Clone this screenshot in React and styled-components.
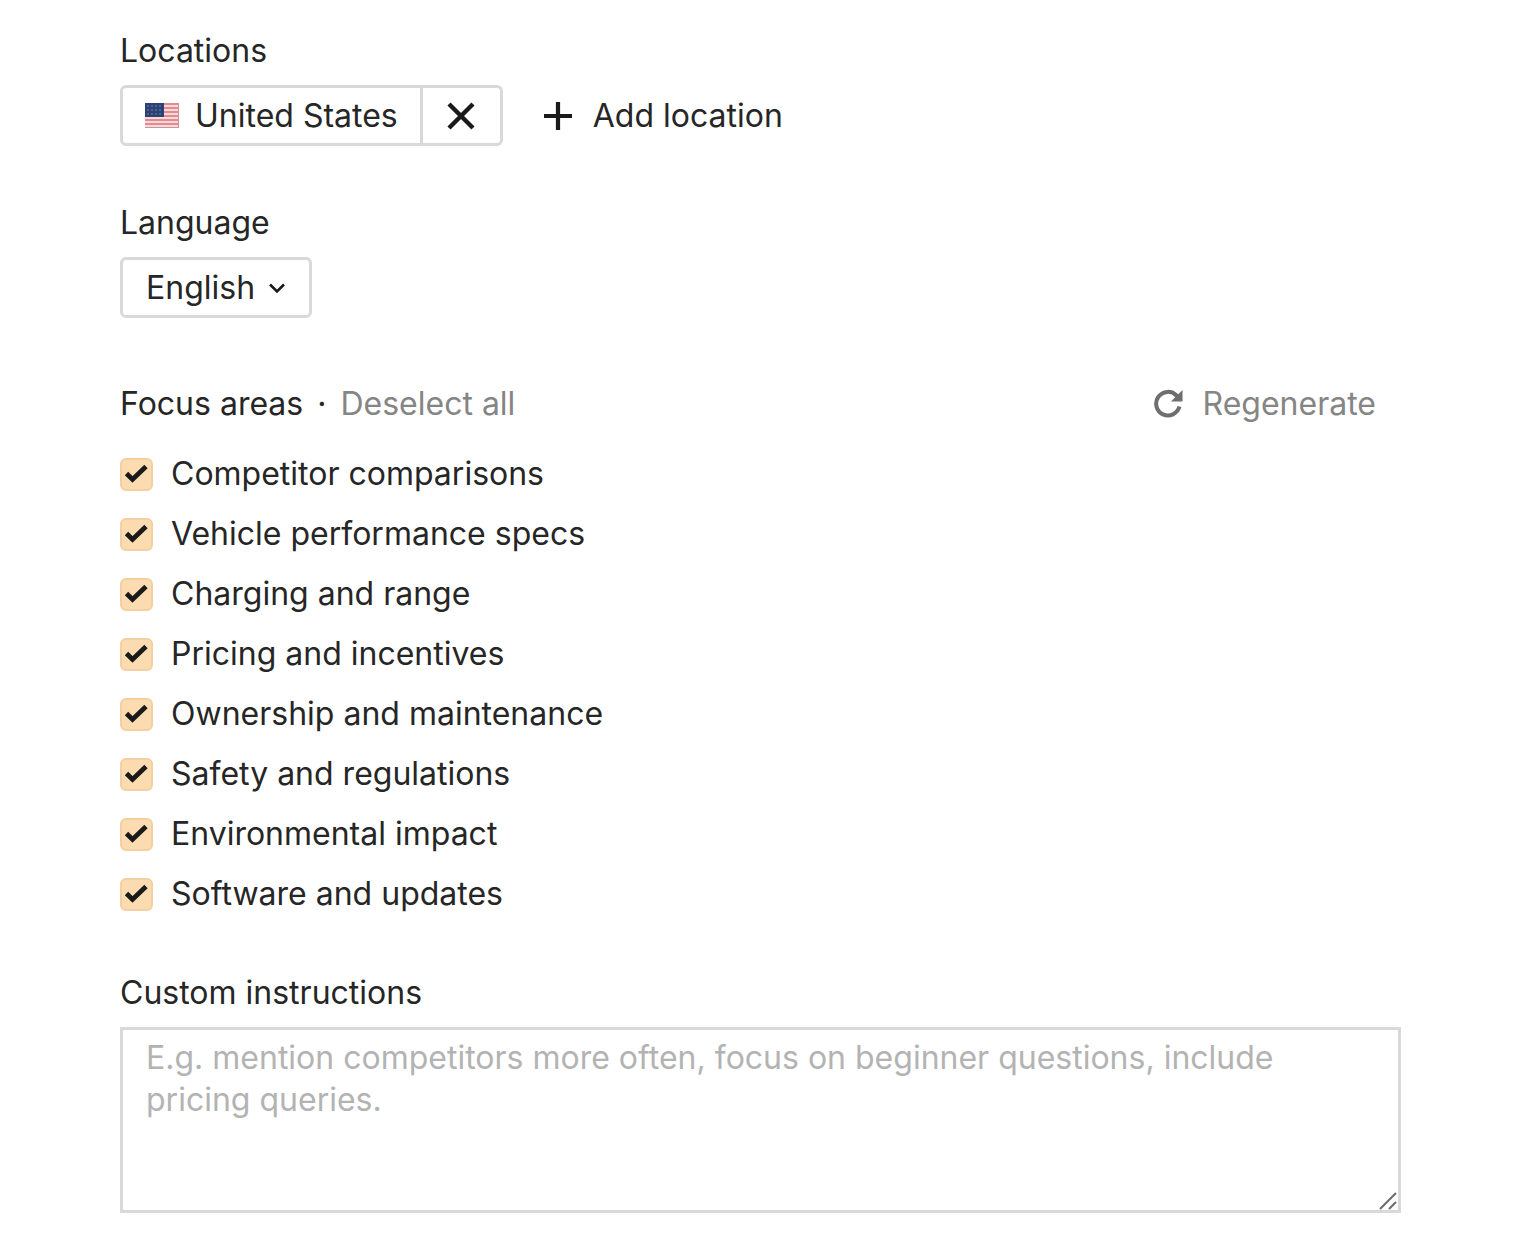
// Packages
import React, { useState } from "react"
import styled, { createGlobalStyle } from "styled-components"

// Variables
const Colors = {
    Text: "#262626",
    Icon: "#1a1a1a",
    Muted: "#858585",
    MutedIcon: "#6e6e6e",
    Placeholder: "#b3b3b3",
    Border: "#d9d9d9",
    Check: "#fddbb0",
    CheckBorder: "#f4cfa1",
}

const focusAreas = [
    "Competitor comparisons",
    "Vehicle performance specs",
    "Charging and range",
    "Pricing and incentives",
    "Ownership and maintenance",
    "Safety and regulations",
    "Environmental impact",
    "Software and updates",
]

// Styles
const GlobalStyle = createGlobalStyle`
    *,
    *:before,
    *:after {
        box-sizing: border-box;
    }

    body {
        margin: 0;
        background: #ffffff;
        color: ${Colors.Text};
    }

    body,
    button,
    select,
    textarea {
        font-family: Inter, "Liberation Sans", sans-serif;
        font-size: 32px;
        line-height: 42px;
        font-optical-sizing: none;
        font-variation-settings: "opsz" 14;
    }
`

const Form = styled.form`
    padding: 30px 119px 48px 120px;
`

const Section = styled.section`
    margin-bottom: ${props => props.$space || 0}px;
`

const Label = styled.label`
    display: block;
    width: fit-content;
    margin-bottom: 13px;
`

const Title = styled.h2`
    margin: 0 0 ${props => props.$space || 0}px;
    font-size: 32px;
    font-weight: 400;
`

const Row = styled.div`
    display: flex;
    align-items: center;
    flex-wrap: wrap;
    gap: ${props => props.$gap || 0}px;
`

const Chip = styled.div`
    display: flex;
    height: 61px;
    border: 3px solid ${Colors.Border};
    border-radius: 6px;
`

const ChipName = styled.span`
    display: flex;
    align-items: center;
    gap: 16px;
    padding: 0 22px;
`

const Button = styled.button`
    display: flex;
    align-items: center;
    gap: 20px;
    padding: 0;
    border: 0;
    background: none;
    color: ${props => (props.$muted ? Colors.Muted : Colors.Text)};
    cursor: pointer;
`

const Remove = styled(Button)`
    justify-content: center;
    width: 80px;
    border-left: 3px solid ${Colors.Border};
`

const SelectBox = styled.div`
    position: relative;
    width: fit-content;

    select {
        display: block;
        height: 61px;
        padding: 0 53px 0 23px;
        border: 3px solid ${Colors.Border};
        border-radius: 6px;
        background: none;
        color: ${Colors.Text};
        appearance: none;
    }

    svg {
        position: absolute;
        top: 20px;
        right: 25px;
        pointer-events: none;
    }
`

const FocusHeader = styled.div`
    display: flex;
    align-items: center;
    justify-content: space-between;
    margin-bottom: 28px;
    padding-right: 25px;
`

const List = styled.ul`
    display: flex;
    flex-direction: column;
    gap: 18px;
    margin: 0;
    padding: 0;
    list-style: none;
`

const CheckLabel = styled.label`
    display: flex;
    align-items: center;
    gap: 18px;
    width: fit-content;
`

const CheckBox = styled.span`
    position: relative;
    width: 33px;
    height: 33px;

    input {
        display: block;
        width: 33px;
        height: 33px;
        margin: 0;
        border: 2px solid ${Colors.Border};
        border-radius: 6px;
        appearance: none;
    }

    input:checked {
        border-color: ${Colors.CheckBorder};
        background: ${Colors.Check};
    }

    svg {
        position: absolute;
        top: 0;
        left: 0;
        visibility: hidden;
        pointer-events: none;
    }

    input:checked + svg {
        visibility: visible;
    }
`

const TextBox = styled.div`
    position: relative;

    textarea {
        display: block;
        width: 100%;
        height: 186px;
        padding: 7px 23px;
        border: 3px solid ${Colors.Border};
        border-radius: 0;
        color: ${Colors.Text};
        resize: none;
    }

    textarea::placeholder {
        color: ${Colors.Placeholder};
        opacity: 1;
    }

    svg {
        position: absolute;
        right: 2px;
        bottom: 2px;
        pointer-events: none;
    }
`

// Icons
const Flag = () => (
    <svg width="34" height="25" viewBox="0 0 34 25" aria-hidden="true">
        <rect width="34" height="25" fill="#f6d9da" />
        {[0, 4, 8, 12, 16, 20, 24].map(y => (
            <rect key={y} y={y} width="34" height="2" fill="#e58a90" />
        ))}
        <rect width="19" height="14" fill="#2c4274" />
        {[2, 6, 10].map(y =>
            [3, 7, 11, 15].map(x => (
                <circle
                    key={`${x}-${y}`}
                    cx={x}
                    cy={y + 1}
                    r="0.8"
                    fill="#7687ae"
                />
            ))
        )}
        <path d="M33.5 0V24.5H0" fill="none" stroke="#c4979b" />
    </svg>
)

const Cross = () => (
    <svg width="28" height="28" viewBox="0 0 28 28" aria-hidden="true">
        <path
            d="M2 2L26 26M26 2L2 26"
            stroke={Colors.Icon}
            strokeWidth="4.4"
            fill="none"
        />
    </svg>
)

const Plus = () => (
    <svg width="30" height="30" viewBox="0 0 30 30" aria-hidden="true">
        <path
            d="M15 1V29M1 15H29"
            stroke={Colors.Icon}
            strokeWidth="4.2"
            fill="none"
        />
    </svg>
)

const Chevron = () => (
    <svg width="20" height="20" viewBox="0 0 20 20" aria-hidden="true">
        <path
            d="M3 7.5L10 14.5L17 7.5"
            stroke={Colors.Icon}
            strokeWidth="2.6"
            fill="none"
        />
    </svg>
)

const Refresh = () => (
    <svg width="30" height="30" viewBox="0 0 30 30" aria-hidden="true">
        <path
            d="M26.4 17.6A11.8 11.8 0 1 1 23.5 6.5L25.5 9"
            stroke={Colors.MutedIcon}
            strokeWidth="4"
            fill="none"
        />
        <path d="M29.5 1V12.5H18Z" fill={Colors.MutedIcon} />
    </svg>
)

const Tick = () => (
    <svg width="33" height="33" viewBox="0 0 33 33" aria-hidden="true">
        <path
            d="M6.5 15.5L12.5 21.5L26 8.5"
            stroke={Colors.Icon}
            strokeWidth="4.8"
            fill="none"
        />
    </svg>
)

const Grip = () => (
    <svg width="20" height="20" viewBox="0 0 20 20" aria-hidden="true">
        <path
            d="M1 18L17 2M10 18L17 11"
            stroke="#6b6b6b"
            strokeWidth="2"
            fill="none"
        />
    </svg>
)

function App() {
    const [selected, setSelected] = useState(focusAreas)

    const toggle = area =>
        setSelected(
            selected.includes(area)
                ? selected.filter(item => item !== area)
                : [...selected, area]
        )

    return (
        <>
            <GlobalStyle />

            <Form>
                <Section $space={56}>
                    <Title $space={13}>Locations</Title>

                    <Row $gap={40}>
                        <Chip>
                            <ChipName>
                                <Flag />
                                United States
                            </ChipName>
                            <Remove
                                type="button"
                                aria-label="Remove United States"
                            >
                                <Cross />
                            </Remove>
                        </Chip>

                        <Button type="button">
                            <Plus />
                            Add location
                        </Button>
                    </Row>
                </Section>

                <Section $space={65}>
                    <Label htmlFor="language">Language</Label>

                    <SelectBox>
                        <select id="language">
                            <option>English</option>
                        </select>
                        <Chevron />
                    </SelectBox>
                </Section>

                <Section $space={57}>
                    <FocusHeader>
                        <Row $gap={14}>
                            <Title>Focus areas</Title>
                            <span>·</span>
                            <Button
                                type="button"
                                $muted
                                onClick={() => setSelected([])}
                            >
                                Deselect all
                            </Button>
                        </Row>

                        <Button
                            type="button"
                            $muted
                            onClick={() => setSelected(focusAreas)}
                        >
                            <Refresh />
                            Regenerate
                        </Button>
                    </FocusHeader>

                    <List>
                        {focusAreas.map(area => (
                            <li key={area}>
                                <CheckLabel>
                                    <CheckBox>
                                        <input
                                            type="checkbox"
                                            checked={selected.includes(area)}
                                            onChange={() => toggle(area)}
                                        />
                                        <Tick />
                                    </CheckBox>
                                    {area}
                                </CheckLabel>
                            </li>
                        ))}
                    </List>
                </Section>

                <Section>
                    <Label htmlFor="instructions">Custom instructions</Label>

                    <TextBox>
                        <textarea
                            id="instructions"
                            placeholder="E.g. mention competitors more often, focus on beginner questions, include pricing queries."
                        />
                        <Grip />
                    </TextBox>
                </Section>
            </Form>
        </>
    )
}

export default App
